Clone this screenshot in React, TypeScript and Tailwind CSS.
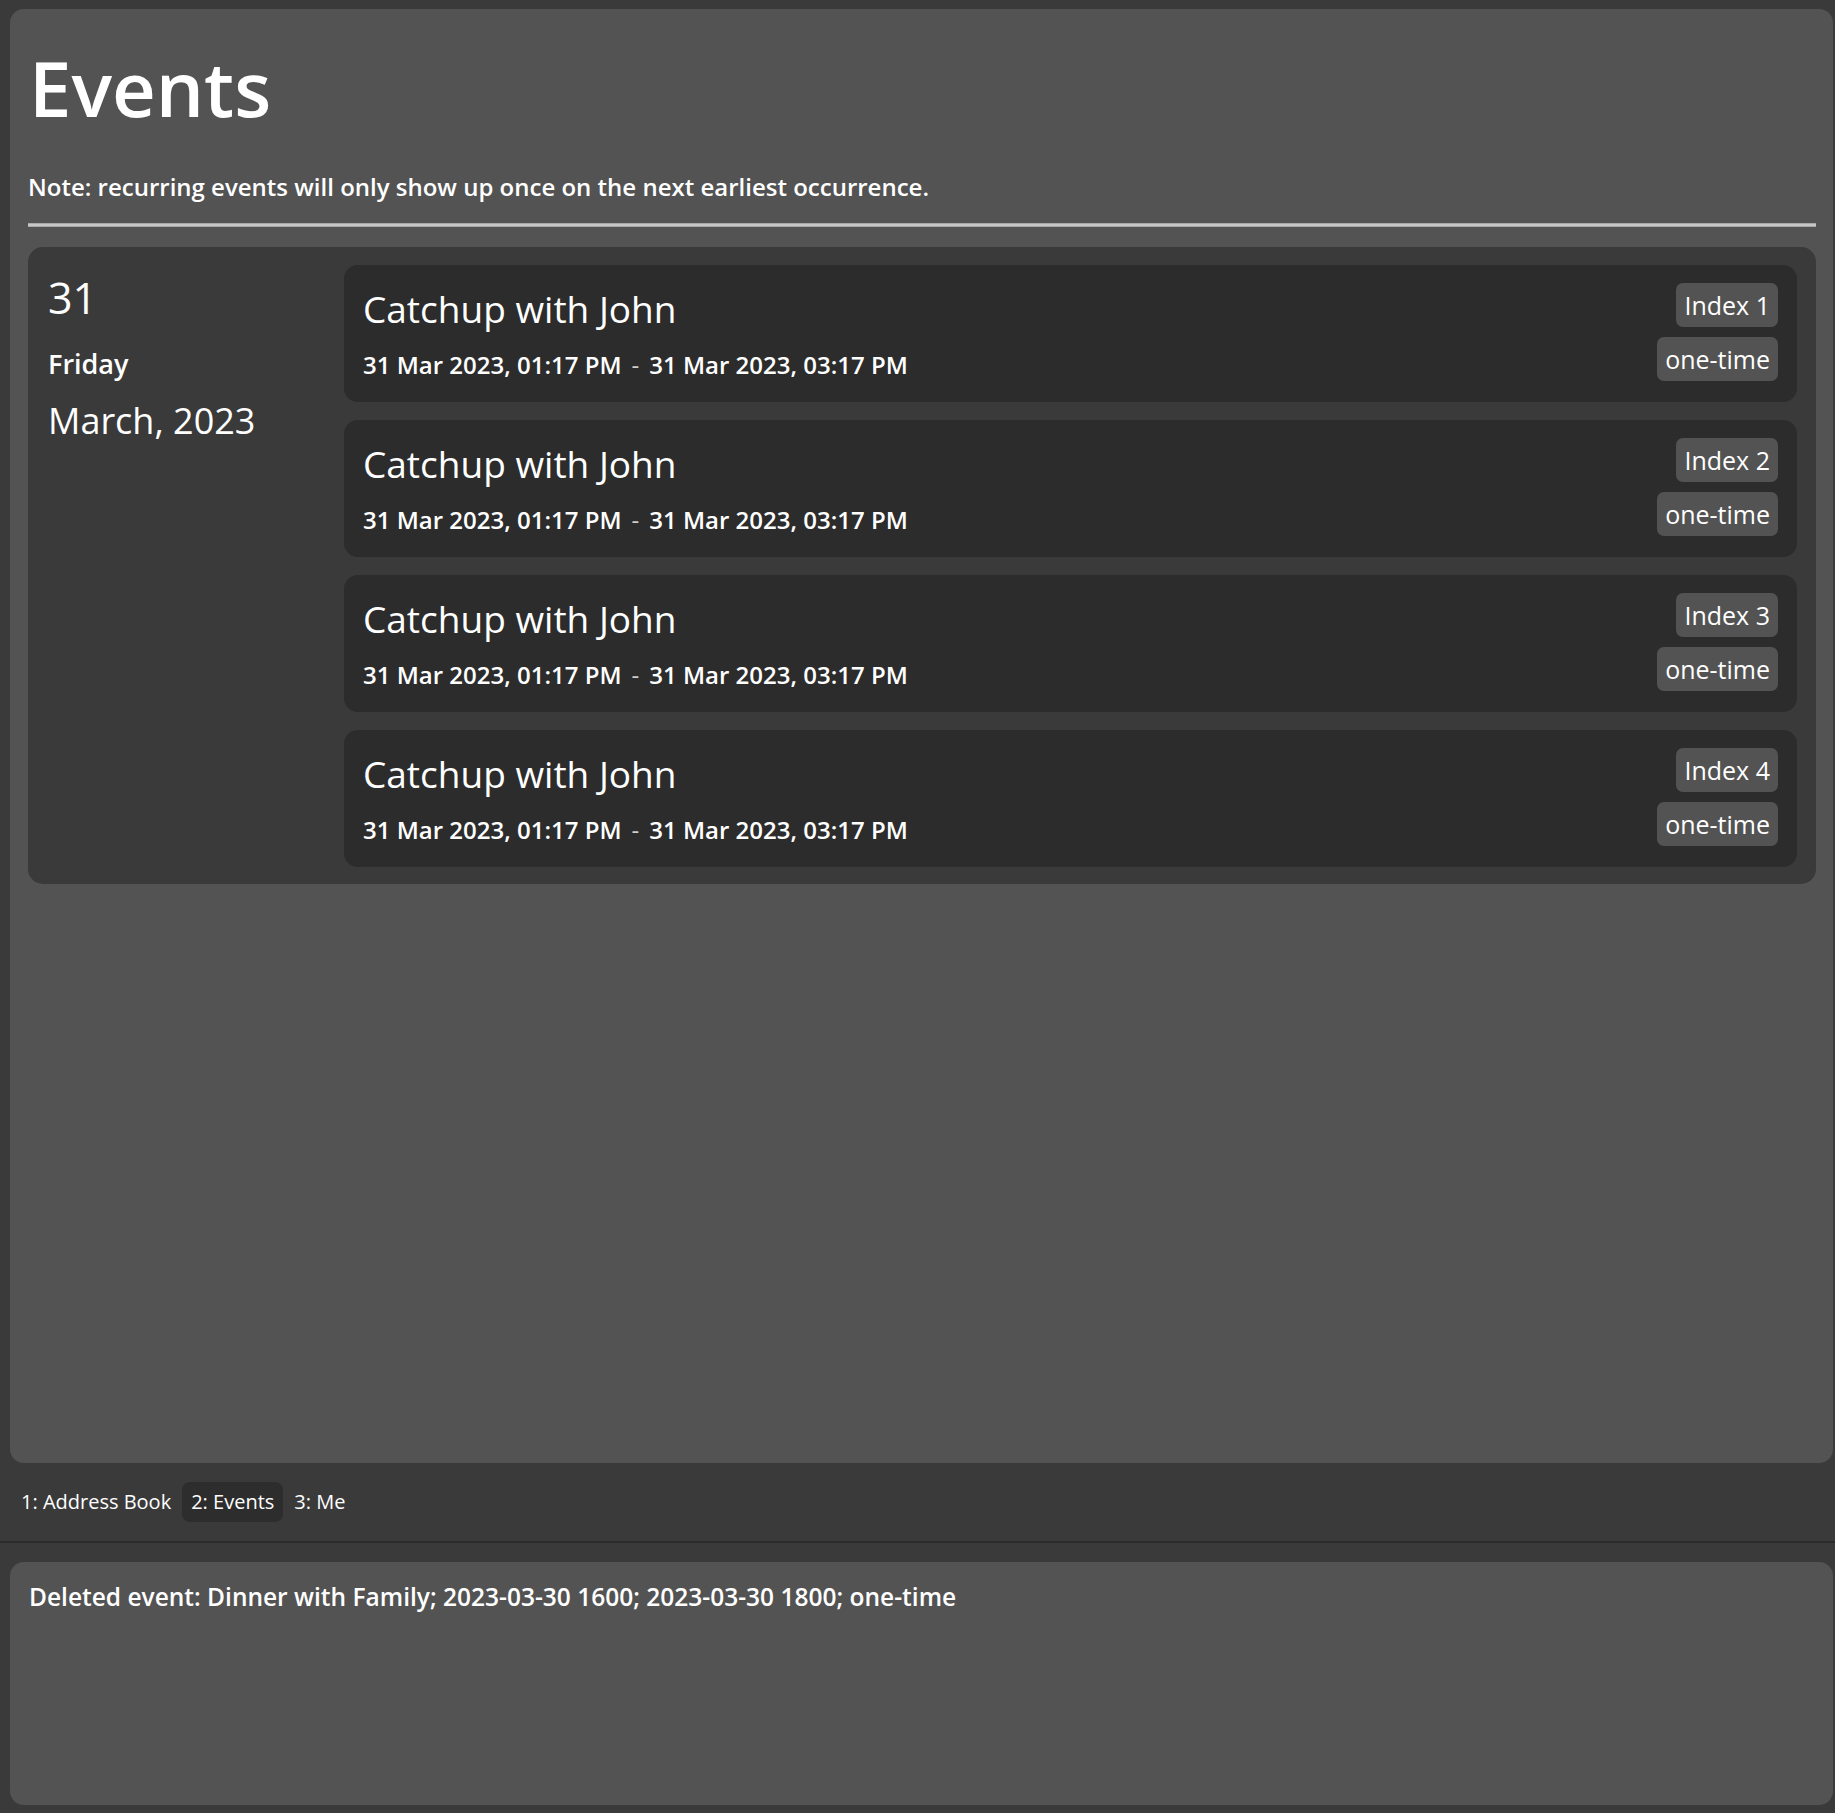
const events = [1, 2, 3, 4].map((i) => ({
  index: i,
  title: "Catchup with John",
  start: "31 Mar 2023, 01:17 PM",
  end: "31 Mar 2023, 03:17 PM",
  kind: "one-time",
}));

function Badge({ text }: { text: string }) {
  return (
    <div className="h-[44px] px-[8px] flex items-center rounded-[7px] bg-[#535353] text-[25px] leading-[32px] text-white">
      {text}
    </div>
  );
}

function EventCard({ ev }: { ev: (typeof events)[number] }) {
  return (
    <div className="h-[137px] rounded-[14px] bg-[#2c2c2c] pl-[19px] pr-[19px] flex justify-between">
      <div className="flex flex-col">
        <div className="mt-[22px] text-[37px] leading-[44px] text-white">{ev.title}</div>
        <div className="mt-[18px] flex items-center gap-[10px] text-[24px] leading-[32px] font-semibold text-white">
          <span>{ev.start}</span>
          <span className="text-[#d0d0d0] font-normal">-</span>
          <span>{ev.end}</span>
        </div>
      </div>
      <div className="pt-[18px] flex flex-col items-end gap-[10px]">
        <Badge text={`Index ${ev.index}`} />
        <Badge text={ev.kind} />
      </div>
    </div>
  );
}

export default function App() {
  return (
    <div className="w-full h-[1813px] bg-[#3a3a3a] flex flex-col pt-[9px] font-['Open_Sans',sans-serif] text-white">
      {/* main panel */}
      <div className="ml-[10px] w-[1823px] h-[1454px] shrink-0 rounded-[14px] bg-[#535353] pl-[18px] pr-[17px] pt-[40px]">
        <h1 className="text-[76px] leading-[78px] font-semibold pl-[1px]">Events</h1>
        <p className="mt-[44px] text-[24px] leading-[32px] font-semibold">
          Note: recurring events will only show up once on the next earliest occurrence.
        </p>
        <div className="mt-[20px] h-[4px] bg-[#c6c6c6] border-y border-[#a9a9a9]" />

        <div className="mt-[20px] rounded-[15px] bg-[#3a3a3a] pt-[18px] pb-[17px] pl-[20px] pr-[19px] flex">
          <div className="w-[296px] shrink-0 pt-[6px] flex flex-col">
            <div className="text-[43px] leading-[54px]">31</div>
            <div className="mt-[21px] text-[27px] leading-[36px] font-semibold">Friday</div>
            <div className="mt-[17px] text-[36px] leading-[44px]">March, 2023</div>
          </div>
          <div className="flex-1 flex flex-col gap-[18px]">
            {events.map((ev) => (
              <EventCard key={ev.index} ev={ev} />
            ))}
          </div>
        </div>
      </div>

      {/* tab bar */}
      <div className="h-[78px] shrink-0 flex items-center pl-[12px] gap-[2px] text-[20px] leading-[28px]">
        <div className="h-[40px] px-[9px] flex items-center rounded-[8px]">1: Address Book</div>
        <div className="h-[40px] px-[9px] flex items-center rounded-[8px] bg-[#2d2d2d]">2: Events</div>
        <div className="h-[40px] px-[9px] flex items-center rounded-[8px]">3: Me</div>
      </div>
      <div className="h-[2px] shrink-0 bg-[#2b2b2b]" />

      {/* result display */}
      <div className="mt-[19px] ml-[10px] w-[1823px] h-[243px] shrink-0 rounded-[14px] bg-[#535353] pl-[19px] pt-[19px]">
        <p className="text-[24.5px] leading-[32px] font-semibold">
          Deleted event: Dinner with Family; 2023-03-30 1600; 2023-03-30 1800; one-time
        </p>
      </div>
    </div>
  );
}
